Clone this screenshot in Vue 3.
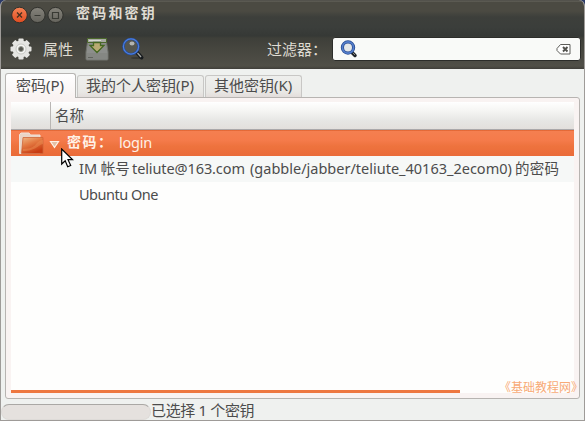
<script setup>
import { ref } from 'vue'

const tabs = [
  { label: '密码(P)', kind: 'passwords' },
  { label: '我的个人密钥(P)', kind: 'personal' },
  { label: '其他密钥(K)', kind: 'other' },
]
const active = ref('passwords')
const filter = ref('')
</script>

<template>
  <div class="desktop">
    <div class="window">
      <header class="chrome">
        <div class="titlebar">
          <svg class="controls" width="54" height="18" viewBox="0 0 54 18">
            <defs>
              <linearGradient id="closeFill" x2="0" y2="1"><stop stop-color="#f58355" /><stop offset="1" stop-color="#df4b20" /></linearGradient>
              <linearGradient id="grayFill" x2="0" y2="1"><stop stop-color="#85837b" /><stop offset="1" stop-color="#64635c" /></linearGradient>
            </defs>
            <circle cx="9.500" cy="9" r="7.800" fill="url(#closeFill)" stroke="#30312d" />
            <circle cx="27.500" cy="9" r="7.600" fill="url(#grayFill)" stroke="#30312d" />
            <circle cx="45.500" cy="9" r="7.600" fill="url(#grayFill)" stroke="#30312d" />
            <path d="M7 6.500l5 5m0-5l-5 5" stroke="#47301f" stroke-width="1.400" />
            <path d="M24.500 9.500h6M42.500 6.500h6v6h-6z" stroke="#393a34" fill="none" stroke-width="1.200" />
          </svg>
          <h1>密码和密钥</h1>
        </div>
        <div class="toolbar">
          <svg class="gear" width="24" height="24" viewBox="0 0 24 24">
            <g fill="#e5e5e2">
              <rect v-for="a in [0, 45, 90, 135]" :key="a" x="9.400" y="1.500" width="5.200" height="21" rx="1" :transform="`rotate(${a} 12 12)`" />
              <circle cx="12" cy="12" r="8.500" />
            </g>
            <circle cx="12" cy="12" r="5" fill="#f5f5f3" stroke="#c8c9c4" />
            <circle cx="12" cy="12" r="2.500" fill="#555650" stroke="#999b92" />
          </svg>
          <span class="props">属性</span>
          <svg class="drive" width="24" height="24" viewBox="0 0 24 24">
            <path d="M3 2h18l2 13v7q0 1-1 1H2q-1 0-1-1v-7z" fill="#8c8e8b" stroke="#70736c" />
            <path d="M2 16h20v6H2z" fill="#858783" />
            <path d="M2.500 1.500h19v4h-19z" fill="#a9aba5" stroke="#4b682b" />
            <path d="M4 3.500h12" stroke="#d7d8d1" />
            <path d="M8.500 5.500h7v3h3.500L12 15.500 5 8.500h3.500z" fill="#b9aa72" stroke="#456722" stroke-width="1.300" />
            <path d="M3 20.500h5" stroke="#60635d" />
          </svg>
          <svg class="find" width="24" height="24" viewBox="0 0 24 24">
            <ellipse cx="15" cy="21" rx="5" ry="1" fill="#383934" />
            <path d="M16 15.500l4.500 5" stroke="#171b1e" stroke-width="4" stroke-linecap="round" />
            <path d="M16.500 16l3.500 4" stroke="#a4a5a0" stroke-width="1.300" />
            <circle cx="10" cy="9.500" r="7.600" fill="#55564f" stroke="#214c9f" stroke-width="2.400" />
            <circle cx="10" cy="9.500" r="7.600" fill="none" stroke="#4e7edb" stroke-width="1.200" />
            <ellipse cx="11" cy="6.500" rx="2.500" ry="2" fill="#b3b4b1" />
          </svg>
          <label for="filter">过滤器：</label>
          <div class="entry">
            <svg width="18" height="18" viewBox="0 0 18 18">
              <path d="M11.500 12l3.500 3.500" stroke="#202428" stroke-width="3.500" stroke-linecap="round" />
              <path d="M13 13l2 2" stroke="#8b8b83" />
              <circle cx="8" cy="7.500" r="5.600" fill="#e4e6e7" stroke="#274b91" stroke-width="3.200" />
              <circle cx="8" cy="7.500" r="5.600" fill="none" stroke="#567fcc" stroke-width="1.600" />
            </svg>
            <input id="filter" v-model="filter" type="text" />
            <svg class="clear" width="15" height="11" viewBox="0 0 15 11" @click="filter = ''">
              <path d="M4.500.500h9.500v9.500H4.500L1 6.500v-2z" fill="#fff" stroke="#5d5d58" />
              <path d="M7 3l4.500 4.500m0-4.500L7 7.500" stroke="#51514c" stroke-width="1.900" />
            </svg>
          </div>
        </div>
      </header>

      <main>
        <nav>
          <button v-for="tab in tabs" :key="tab.kind" :class="[tab.kind, { active: active === tab.kind }]" @click="active = tab.kind">
            <span>{{ tab.label }}</span>
          </button>
        </nav>
        <section class="panel">
          <div class="tree">
            <div class="columns"><span></span><span class="name">名称</span></div>
            <div class="row selected">
              <svg class="folder" width="25" height="23" viewBox="0 0 25 23">
                <defs><linearGradient id="folderFill" x2="0.500" y2="1"><stop stop-color="#efb986" /><stop offset=".45" stop-color="#e47b43" /><stop offset="1" stop-color="#c83c12" /></linearGradient></defs>
                <path d="M.5 21.500V2.500L2 1h8l1.500 2H21v18.500z" fill="#ead5c6" stroke="#f1e2d8" />
                <path d="M2.500 21.500L4 5.500h20v16z" fill="url(#folderFill)" stroke="#cf6638" stroke-width=".8" />
                <path d="M4 17c8 0 12-3 14-6 2-2 4-3 6-3v4c-5 1-7 7-20 7z" fill="#ef995a" opacity=".4" />
              </svg>
              <svg class="expander" width="11" height="9" viewBox="0 0 11 9"><path d="M1.500 1.500h8L5.500 7.500z" fill="#e3c0a5" stroke="#fff0e5" stroke-width="1.200" /></svg>
              <b>密码：</b><span class="login">login</span>
            </div>
            <div class="row child alt"><span class="im">IM 帐号</span><span class="mail">teliute@163.com</span><span class="path">(gabble/jabber/teliute_40163_2ecom0)</span><span class="of">的密码</span></div>
            <div class="row child"><span class="one">Ubuntu One</span></div>
            <div class="strip"></div>
          </div>
        </section>
        <footer><div class="progress"></div><span>已选择 1 个密钥</span></footer>
      </main>
    </div>
    <div class="watermark">《基础教程网》</div>
    <svg class="pointer" width="13" height="20" viewBox="0 0 13 20">
      <path d="M.7 1v15l3.500-3.300 2.500 6 3-1.200-2.700-5.800h4.700z" fill="#fff" stroke="#000" stroke-width="1.200" />
    </svg>
  </div>
</template>

<style>
body { margin: 0; overflow: hidden; }
</style>

<style scoped>
* { box-sizing: border-box; }
.desktop { position: relative; width: 585px; height: 421px; background: #2b3a67; overflow: hidden; color: #4c4c4c; font: 15px/20px "Noto Sans", "Noto Sans CJK SC", sans-serif; white-space: nowrap; }
.window { display: flex; flex-direction: column; width: 585px; height: 421px; border: 1px solid #9e9b98; border-top: 0; border-radius: 6px 6px 0 0; overflow: hidden; background: #eff1ef; }
.chrome { height: 69px; flex: none; margin: 0 -1px; background: linear-gradient(#3c3b37 0, #6a6961 1px, #4b4a42 2px, #4b4a42 11px, #3d3f3b 17px, #3b3e3b 27px, #363936 36px, #3e3f39 38px, #45453e 48px, #504f47 66px, #3f3e39 69px); border-left: 1px solid #3a3a36; border-right: 1px solid #3a3a36; }
.titlebar { height: 30px; display: flex; align-items: center; padding-left: 9px; }
h1 { margin: -5px 0 0 12px; font-size: 14px; line-height: 20px; letter-spacing: 2.200px; color: #dfdbd2; font-weight: 700; }
.toolbar { height: 37px; display: flex; align-items: center; padding-left: 8px; color: #dfdbd2; }
.gear, .drive, .find { flex: none; }
.props { width: 42px; padding-left: 10px; }
.drive { margin-left: 10px; }
.find { margin-left: 12px; }
.toolbar label { margin-left: 122px; width: 65px; overflow: hidden; }
.entry { height: 24px; width: 249px; margin-top: 1px; display: flex; align-items: center; border: 1px solid #2c2d2a; border-radius: 3px; background: #f9faf8; padding: 0 9px 0 7px; }
.entry input { flex: 1; min-width: 0; border: 0; outline: 0; background: transparent; }
main { display: flex; flex-direction: column; flex: 1; padding: 4px 4px 0; }
nav { display: flex; align-items: flex-end; height: 24px; gap: 1px; position: relative; z-index: 1; }
button { height: 22px; padding: 0 0 2px; border: 1px solid #c8c7c5; border-bottom: 0; border-radius: 3px 3px 0 0; color: inherit; font: inherit; background: linear-gradient(#eeefed, #e9e8e5 75%, #e3dddb); line-height: 19px; text-align: left; }
button.active { height: 25px; margin-bottom: -1px; border-color: #b7b5b2; background: linear-gradient(#fff, #fbf8f7 60%, #f9f3f2); line-height: 21px; }
button span { display: block; margin-left: 8px; }
.passwords { width: 71px; }
.passwords span { margin-left: 10px; font-size: 15px; }
.personal { width: 127px; }
.other { width: 97px; }
.panel { height: 302px; border: 1px solid #b7b4b1; border-radius: 0 3px 3px 3px; padding: 4px 5px; background: #f9f3f2; }
.tree { height: 291px; width: 563px; display: flex; flex-direction: column; background: #fefefd; }
.columns { height: 28px; flex: none; display: flex; background: linear-gradient(#fff, #f6f6f4 30%, #e6e6e4 70%, #e2dfdc); border-bottom: 1px solid #aaa8aa; line-height: 26px; }
.columns span:first-child { width: 40px; border-right: 1px solid #b9b6b4; }
.name { padding-left: 4px; font-size: 14.500px; }
.row { height: 26px; flex: none; display: flex; align-items: center; padding-bottom: 1px; font-size: 14.500px; }
.selected { color: #fff1e6; background: linear-gradient(#d4541f 0, #f57f50 1px, #f57b4b 10px, #ee733e 16px, #ea6b39); }
.selected b, .selected .login { margin-top: -1px; }
.folder { margin: 2px 0 0 8px; }
.expander { margin: 3px 0 0 5px; }
b { margin-left: 7px; width: 52px; font-size: 14px; letter-spacing: 1.500px; overflow: hidden; }
.login { letter-spacing: -.2px; }
.child { padding-left: 68px; padding-bottom: 3px; }
.alt { background: #f6f8f7; }
.im { width: 53px; }
.mail { width: 118px; letter-spacing: -.1px; }
.path { width: 265px; }
.of { letter-spacing: .2px; }
.one { letter-spacing: -.5px; }
.strip { width: 449px; height: 3px; margin-top: auto; background: #ee7740; }
footer { height: 20px; display: flex; align-items: center; margin: 3px 0 0 -4px; }
footer span { margin-top: -4px; letter-spacing: -.35px; }
.progress { width: 150px; height: 16px; border-radius: 8px; border: 1px solid #dedbd8; border-top-color: #aaa8a5; background: #e5e1de; }
.watermark { position: absolute; left: 499px; top: 378px; font: 12px/18px "Noto Sans CJK SC", sans-serif; color: #f8aa76; }
.pointer { position: absolute; left: 61px; top: 148px; }
</style>
